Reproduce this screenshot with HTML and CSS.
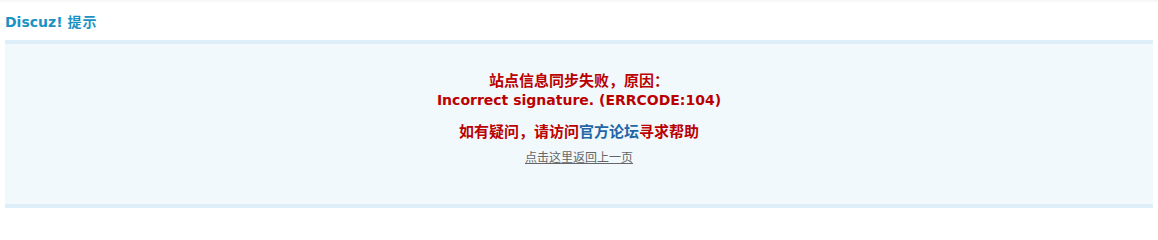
FILE: index.html
```html
<!DOCTYPE html>
<html lang="zh-CN">
<head>
<meta charset="utf-8">
<title>Discuz! 提示</title>
<link rel="stylesheet" href="styles.css">
</head>
<body>
<div class="topstrip"></div>
<div class="page">
  <h3 class="flb">Discuz! <span class="cjk">提示</span></h3>
  <div class="infobox">
    <h4 class="infotitle2"><span class="cjk">站点信息同步失败，原因：</span><br>Incorrect signature. (ERRCODE:104)</h4>
    <h4 class="infotitle2 help"><span class="cjk">如有疑问，请访问<a href="#" class="official">官方论坛</a>寻求帮助</span></h4>
    <p class="back"><a href="#" class="backlink">点击这里返回上一页</a></p>
  </div>
</div>
</body>
</html>
```

FILE: styles.css
```css
html, body {
  margin: 0;
  padding: 0;
  background: #fff;
}
body {
  font-family: "DejaVu Sans", Verdana, "Noto Sans CJK SC", sans-serif;
  font-size: 12px;
  color: #333;
}
.topstrip {
  height: 2px;
  background: #f7f7f7;
}
.page {
  padding: 0 5px;
}
.flb {
  margin: 0;
  height: 38px;
  line-height: 38px;
  font-size: 14px;
  font-weight: bold;
  color: #1a93c4;
}
.flb .cjk {
  font-size: 14px;
  letter-spacing: 1px;
}
.cjk {
  font-family: "Noto Sans CJK SC", sans-serif;
  font-size: 15px;
}
.infobox {
  border-top: 4px solid #deeffa;
  border-bottom: 4px solid #deeffa;
  background: #f2f9fd;
  height: 160px;
  text-align: center;
}
.infotitle2 {
  margin: 0;
  padding-top: 26px;
  font-size: 14px;
  line-height: 19px;
  font-weight: bold;
  color: #bb0000;
}
.infotitle2.help {
  padding-top: 11px;
}
.official {
  color: #2366a8;
  text-decoration: none;
}
.back {
  margin: 6px 0 0;
  line-height: 18px;
}
.backlink {
  font-family: "Noto Sans CJK SC", sans-serif;
  font-size: 12px;
  color: #666;
  text-decoration: underline;
}
```
